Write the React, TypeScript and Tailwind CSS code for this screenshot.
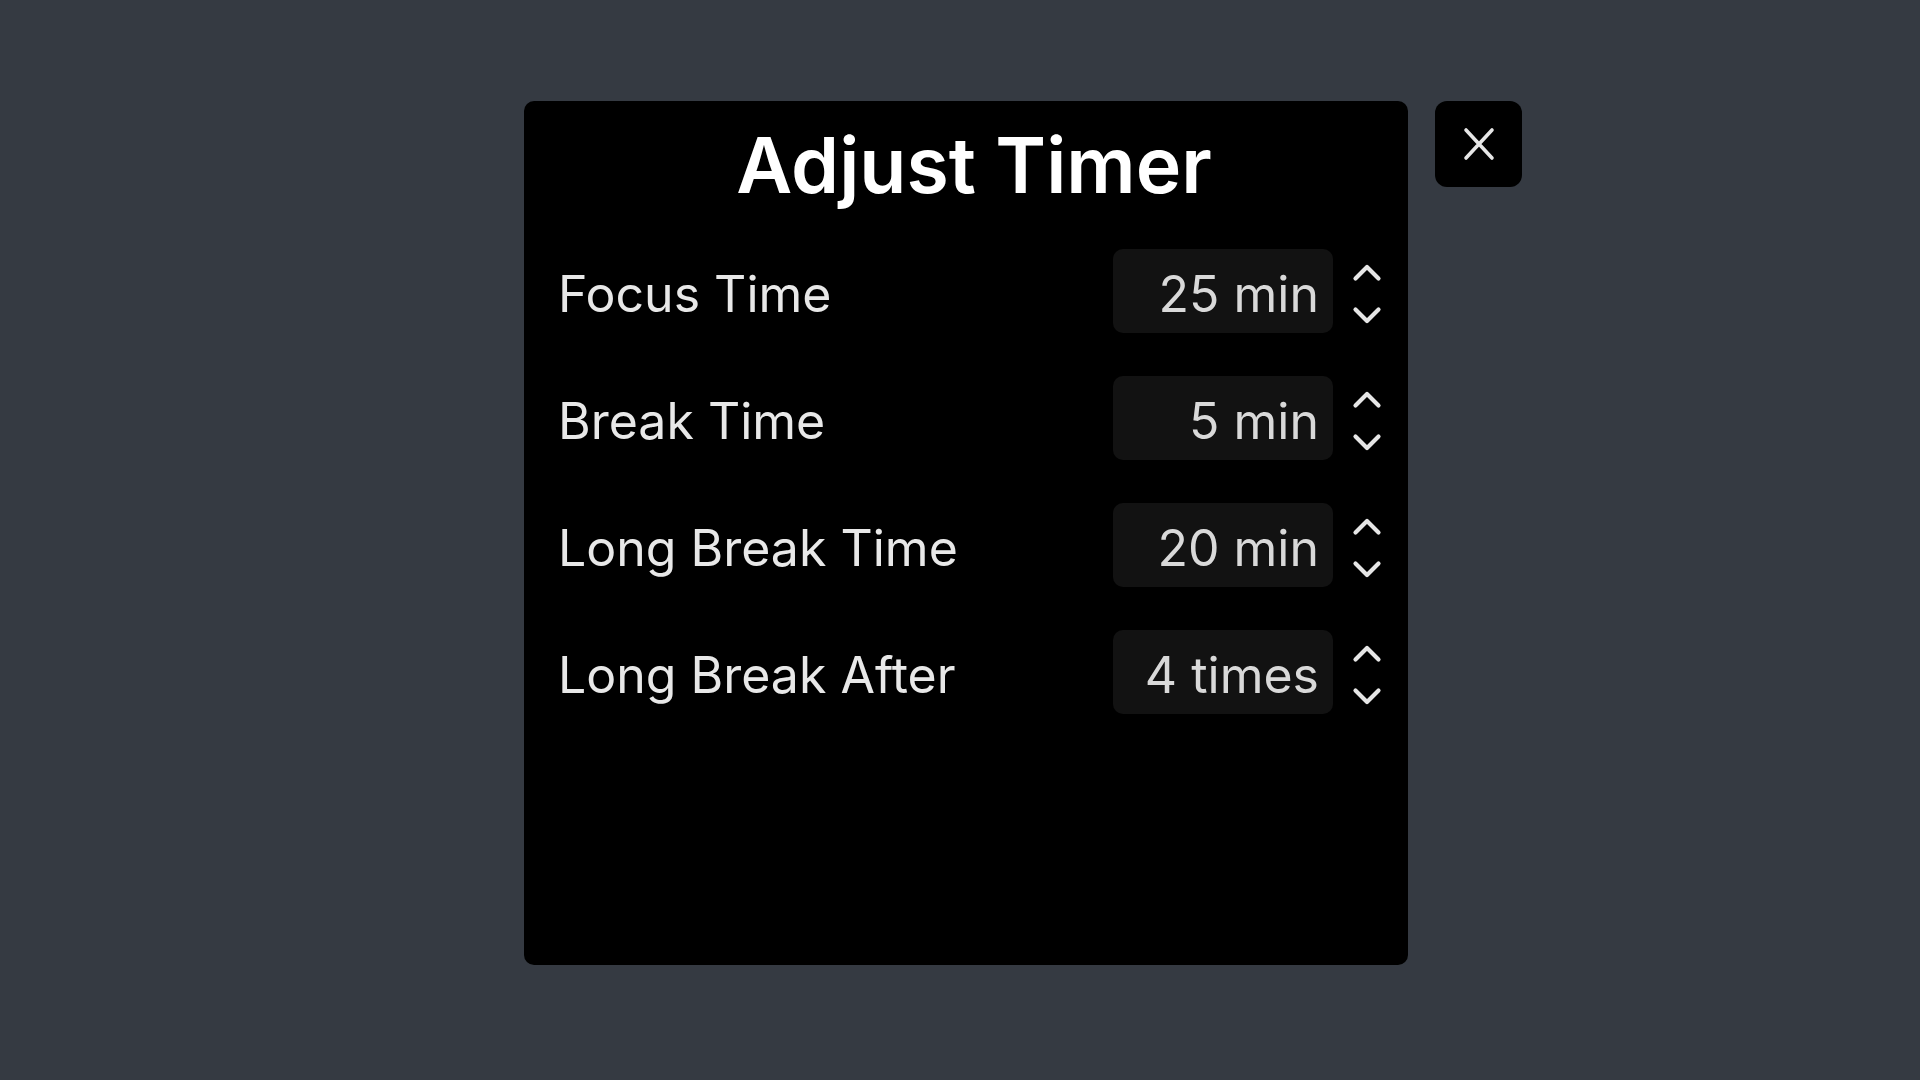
const ROWS = [
  { label: "Focus Time", value: "25 min" },
  { label: "Break Time", value: "5 min" },
  { label: "Long Break Time", value: "20 min" },
  { label: "Long Break After", value: "4 times" },
];

const Spinner = () => (
  <svg width="30" height="68" viewBox="0 0 30 68" fill="none" className="shrink-0">
    <path d="M3.5 21.5 L15 10 L26.5 21.5" stroke="#e6e6e6" strokeWidth="4.2" strokeLinecap="round" strokeLinejoin="round" />
    <path d="M3.5 52.5 L15 64 L26.5 52.5" stroke="#e6e6e6" strokeWidth="4.2" strokeLinecap="round" strokeLinejoin="round" />
  </svg>
);

const Row = ({ label, value }: { label: string; value: string }) => (
  <div className="flex items-center h-[84px]">
    <span className="text-[50px] leading-none text-[#e8e8e8] pl-[2px] pt-[6px]">{label}</span>
    <div className="ml-auto flex items-center gap-[19px]">
      <div className="w-[220px] h-[84px] rounded-[10px] bg-[#121212] flex items-center justify-end pr-[14px] pt-[5px]">
        <span className="text-[50px] leading-none text-[#d9d9d9]">{value}</span>
      </div>
      <Spinner />
    </div>
  </div>
);

export default function App() {
  return (
    <div
      className="min-h-screen w-full bg-[#353a42] flex items-start pl-[524px] pt-[101px] gap-[27px]"
      style={{ fontFamily: "Inter, 'Noto Sans', sans-serif" }}
    >
      <div className="w-[884px] h-[864px] bg-black rounded-[10px] flex flex-col pt-[26px] pl-[32px] pr-[26px]">
        <h1 className="text-center text-[77px] leading-none font-semibold text-white pl-[10px]">
          Adjust Timer
        </h1>
        <div className="flex flex-col gap-[43px] mt-[45px]">
          {ROWS.map((row) => (
            <Row key={row.label} label={row.label} value={row.value} />
          ))}
        </div>
      </div>
      <button className="w-[87px] h-[86px] rounded-[12px] bg-black flex items-center justify-center">
        <svg width="36" height="36" viewBox="0 0 36 36" fill="none">
          <path d="M5 4 L31 32 M31 4 L5 32" stroke="#e6e6e6" strokeWidth="3.6" strokeLinecap="round" />
        </svg>
      </button>
    </div>
  );
}
